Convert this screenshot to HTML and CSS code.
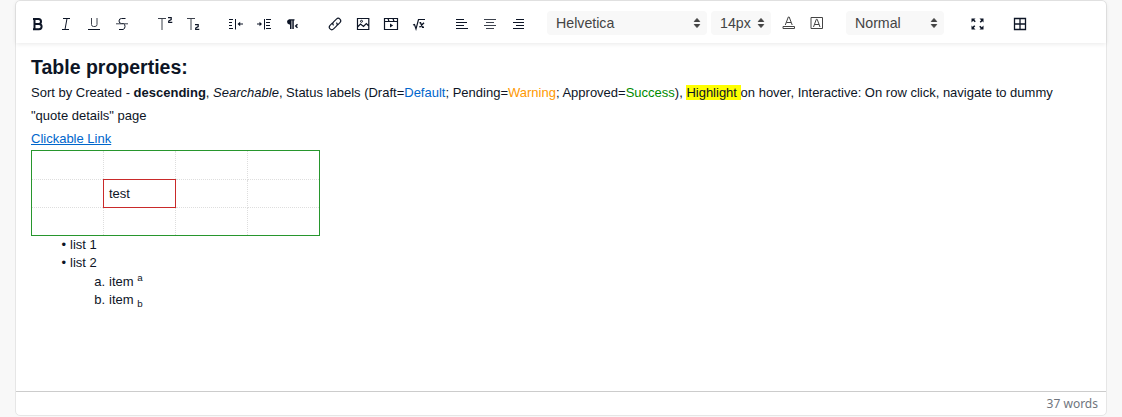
FILE: index.html
```html
<!DOCTYPE html>
<html lang="en">
<head>
<meta charset="utf-8">
<title>Editor</title>
<link rel="stylesheet" href="styles.css">
</head>
<body>
<main class="editor">
  <header class="toolbar">
    <div class="group">
      <button class="tool" aria-label="Bold"><svg viewBox="0 0 18 18"><path stroke-width="2" d="M5.500 4h4a2.500 2.500 0 0 1 0 5h-4zM5.500 9h4.500a2.500 2.500 0 0 1 0 5.200H5.500zM4 4h2M4 14.200h2"/></svg></button>
      <button class="tool" aria-label="Italic"><svg viewBox="0 0 18 18"><path d="M6 3.500h7M5 14.500h7M10 3.500L8 14.500"/></svg></button>
      <button class="tool" aria-label="Underline"><svg viewBox="0 0 18 18"><path class="soft" d="M6.500 3v6.500a2 2 0 0 0 2 2H10a2 2 0 0 0 2-2V3"/><path d="M3 14.500h12"/></svg></button>
      <button class="tool" aria-label="Strike"><svg viewBox="0 0 18 18"><path d="M12.500 3.500H8.500Q6 3.500 6 6t2.500 2.500h2Q12 9 12 11.500t-2 3H6"/><path class="soft" d="M3 8.800h12"/></svg></button>
    </div>
    <div class="group">
      <button class="tool" aria-label="Superscript"><svg viewBox="0 0 18 18"><path class="soft" d="M2 3.500h8M6 3.500V15"/><path stroke-width="1.200" d="M12 2.600h3.200v2L12.700 6v1.400H16.300"/></svg></button>
      <button class="tool" aria-label="Subscript"><svg viewBox="0 0 18 18"><path class="soft" d="M3 3.500h8M7 3.500V15"/><path stroke-width="1.200" d="M11 9.600h3.200v2L11.700 13v1.400H15.300"/></svg></button>
    </div>
    <div class="group">
      <button class="tool" aria-label="Outdent"><svg viewBox="0 0 18 18"><path d="M2 4.500h4M2 7.500h3M2 10.500h3M2 13.500h4M8.500 4v10.500M12 9h4"/><path class="solid" d="M10.500 9L13.200 6.800v4.400z"/></svg></button>
      <button class="tool" aria-label="Indent"><svg viewBox="0 0 18 18"><path d="M9.500 4v10.500M11 4.500h5M11 7.500h4M11 10.500h4M11 13.500h5M2 9h4"/><path class="solid" d="M7 9L4.500 6.800v4.400z"/></svg></button>
      <button class="tool" aria-label="Direction"><svg viewBox="0 0 18 18"><path class="solid" d="M7 9.500H6.200a2.700 2.700 0 0 1 0-5.300H11.500v1.200h-.7V14H9.300V5.400h-.8V14H7z"/><path stroke-width="1.400" d="M14.500 9.300L12.700 11l1.800 1.800"/></svg></button>
    </div>
    <div class="group">
      <button class="tool" aria-label="Link"><svg viewBox="0 0 18 18"><g transform="rotate(-45 9 9)"><path stroke-width="1.100" d="M8 6.500H4.500a2.500 2.500 0 0 0 0 5h4a2.500 2.500 0 0 0 2.500-2.500M10 11.500h3.500a2.500 2.500 0 0 0 0-5h-4A2.500 2.500 0 0 0 7 9"/></g></svg></button>
      <button class="tool" aria-label="Image"><svg viewBox="0 0 18 18"><path stroke-width="1.200" d="M3.500 3.500h11.300v11H3.500zM3.500 12l3-3 3 2.500 2.800-3 2.500 2.500"/><circle cx="7.500" cy="6.300" r="1"/></svg></button>
      <button class="tool" aria-label="Video"><svg viewBox="0 0 18 18"><path stroke-width="1.200" d="M2.500 3.500h13v11h-13zM2.500 6.500h13M6 3.500l1 3M11 3.500l1 3"/><path class="solid" d="M8 8.500l3.200 2-3.200 2z"/></svg></button>
      <button class="tool" aria-label="Formula"><svg viewBox="0 0 18 18"><path stroke-width="1.200" d="M3 10l1.500-.5L6 14l2.500-9.500H15"/><path stroke-width="1.400" d="M9.500 7.800h1l2 4.400h1.500M14 7.800l-4.500 4.400"/></svg></button>
    </div>
    <div class="group">
      <button class="tool" aria-label="Align left"><svg viewBox="0 0 18 18"><path d="M3 4.500h8M3 7.500h11M3 10.500h8M3 13.500h12"/></svg></button>
      <button class="tool" aria-label="Align center"><svg viewBox="0 0 18 18"><path class="soft" d="M3 4.500h12M5 7.500h8M3 10.500h12M5 13.500h8"/></svg></button>
      <button class="tool" aria-label="Align right"><svg viewBox="0 0 18 18"><path d="M7 4.500h8M4 7.500h11M7 10.500h8M4 13.500h11"/></svg></button>
    </div>
    <div class="group selects">
      <div class="picker family"><span>Helvetica</span><svg viewBox="0 0 8 12"><path d="M1.300 4.500L4 1.500l2.700 3zM1.300 7.500L4 10.500l2.700-3z"/></svg></div>
      <div class="picker size"><span>14px</span><svg viewBox="0 0 8 12"><path d="M1.300 4.500L4 1.500l2.700 3zM1.300 7.500L4 10.500l2.700-3z"/></svg></div>
      <div class="colors">
        <button class="tool" aria-label="Text color"><svg viewBox="0 0 18 18"><path class="gray" d="M5.300 10L8.300 2h.9L12.200 10M6.500 7.500h4.500M3 11.500h11.500v2H3z"/></svg></button>
        <button class="tool" aria-label="Background color"><svg viewBox="0 0 18 18"><path class="gray" d="M3 2.500h11.500v11H3zM5.500 12L8.300 4.300h.9L12 12M6.500 9.500h4.500"/></svg></button>
      </div>
    </div>
    <div class="picker heading"><span>Normal</span><svg viewBox="0 0 8 12"><path d="M1.300 4.500L4 1.500l2.700 3zM1.300 7.500L4 10.500l2.700-3z"/></svg></div>
    <button class="tool fullscreen" aria-label="Full screen"><svg viewBox="0 0 18 18"><path class="solid" d="M3.500 3.500h4L6.300 4.700l1.500 1.500-1.100 1.100-1.500-1.500L3.500 7.500zM15.500 3.500v4l-1.200-1.200-1.500 1.500-1.100-1.100 1.500-1.500L11.500 3.500zM15.500 14.500h-4l1.200-1.200-1.500-1.500 1.100-1.100 1.500 1.500 1.700-1.700zM3.500 14.500v-4l1.200 1.200 1.500-1.500 1.100 1.100-1.500 1.500 1.700 1.700z"/></svg></button>
    <button class="tool" aria-label="Table"><svg viewBox="0 0 18 18"><path stroke-width="1.300" d="M3.500 3.500h11v11h-11zM9 3.500v11M3.500 9h11"/></svg></button>
  </header>
  <article class="content">
    <h1 class="title">Table properties:</h1>
    <p class="para">Sort by Created - <strong>descending</strong>, <em>Searchable</em>, Status labels (Draft=<span class="blue">Default</span>; Pending=<span class="orange">Warning</span>; Approved=<span class="green">Success</span>), <span class="mark">Highlight </span>on hover, Interactive: On row click, navigate to dummy "quote details" page</p>
    <p class="para"><a class="link" href="#">Clickable Link</a></p>
    <table class="grid">
      <tr class="first"><td></td><td></td><td></td><td></td></tr>
      <tr><td></td><td class="selected">test</td><td></td><td></td></tr>
      <tr><td></td><td></td><td></td><td></td></tr>
    </table>
    <div class="list">
      <div class="item"><span class="marker">•</span>list 1</div>
      <div class="item"><span class="marker">•</span>list 2</div>
      <div class="item nested"><span class="marker">a.</span>item <sup>a</sup></div>
      <div class="item nested"><span class="marker">b.</span>item <sub>b</sub></div>
    </div>
  </article>
  <footer class="status">37 words</footer>
</main>
</body>
</html>
```
FILE: styles.css
```css
* { box-sizing: border-box; }
body {
  margin: 0;
  height: 417px;
  overflow: hidden;
  padding: 0 15px;
  background: #f8f8f8;
  color: #0d1526;
  font-family: "Liberation Sans", Arial, sans-serif;
  font-size: 13px;
}
.editor {
  height: 416px;
  display: flex;
  flex-direction: column;
  border: 1px solid #e6e6e6;
  border-radius: 5px;
  background: #fff;
}
.toolbar {
  flex: none;
  height: 42px;
  display: flex;
  align-items: center;
  gap: 15px;
  padding: 2px 0 0 8px;
  box-shadow: 0 1px 5px rgba(0, 0, 0, .09);
  border-radius: 5px 5px 0 0;
}
.group, .colors { display: flex; align-items: center; }
.selects { gap: 4px; }
.tool {
  width: 28px;
  height: 24px;
  padding: 4px 5px 2px;
  border: 0;
  background: none;
  display: flex;
}
.tool svg {
  width: 18px;
  height: 18px;
  fill: none;
  stroke: #0d1526;
  stroke-width: 1;
}
.tool .soft { stroke: #3d424d; }
.tool .gray { stroke: #444; }
.tool .solid { fill: #0d1526; stroke: none; }
.picker {
  height: 24px;
  display: flex;
  align-items: center;
  justify-content: space-between;
  padding: 0 6px 0 9px;
  border-radius: 4px;
  background: #f8f8f8;
  color: #444;
  font-size: 14.2px;
}
.picker span { margin-top: -1px; }
.picker svg { width: 8px; height: 12px; fill: #444; stroke: #444; stroke-width: 1; stroke-linejoin: round; }
.family { width: 160px; }
.size { width: 60px; }
.heading { width: 98px; }
.fullscreen { margin-left: 4px; }
.content { flex: 1; padding: 11px 15px 0; }
.title { margin: 0 0 1px; font-size: 19.5px; line-height: 26px; }
.para { margin: 0; line-height: 23px; }
.blue { color: #0066cc; }
.orange { color: #ff9900; }
.green { color: #008a00; }
.mark { background: #ff0; }
.link { color: #0066cc; }
.grid {
  width: 289px;
  height: 86px;
  table-layout: fixed;
  border-collapse: collapse;
  border: 1px solid #27962d;
}
.grid tr { height: 28px; }
.grid .first { height: 29px; }
.grid td { border: 1px dotted #dedede; padding: 0 5px; }
.grid .selected { border: 1px solid #c92a2a; }
.item { display: flex; height: 18.4px; line-height: 18px; white-space: pre; }
.marker { width: 39px; padding-right: 4px; text-align: right; }
.nested .marker { width: 78px; }
.item sup, .item sub { font-size: 9.75px; line-height: 0; }
.item sup { align-self: flex-start; margin-top: 5px; }
.item sub { align-self: flex-start; margin-top: 13px; }
.status {
  flex: none;
  height: 24px;
  padding-right: 8px;
  border-top: 1px solid #ccc;
  color: #70757d;
  font: 12px/23px "Noto Sans", sans-serif;
  text-align: right;
}
```
